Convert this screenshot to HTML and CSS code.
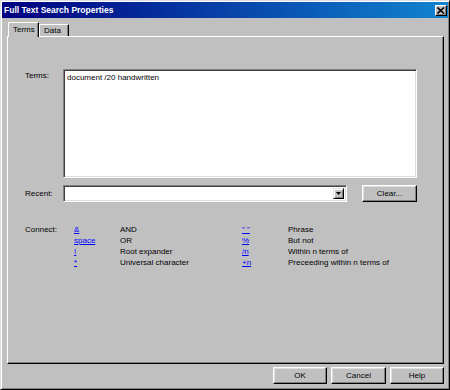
FILE: index.html
```html
<!DOCTYPE html>
<html>
<head>
<meta charset="utf-8">
<link rel="stylesheet" href="styles.css">
</head>
<body>
<div class="window">
  <div class="titlebar">
    <span class="title">Full Text Search Properties</span>
    <span class="close"><svg width="8" height="7" viewBox="0 0 8 7"><path d="M0.5 0.5 L7 6.5 M7 0.5 L0.5 6.5" stroke="#000" stroke-width="1.6"/></svg></span>
  </div>
  <div class="content">
    <div class="tabs">
      <div class="tab active">Terms</div>
      <div class="tab">Data</div>
    </div>
    <div class="panel">
      <div class="form">
        <div class="label label-top">Terms:</div>
        <div class="textarea">document /20 handwritten</div>
        <div class="label">Recent:</div>
        <div class="recent-row">
          <div class="combo">
            <div class="combo-btn"><svg width="5" height="3" viewBox="0 0 5 3"><path d="M0 0 H5 L2.5 3 Z" fill="#000"/></svg></div>
          </div>
          <div class="btn clear">Clear...</div>
        </div>
      </div>
      <div class="connect">
        <div class="label">Connect:</div>
        <a class="op">&amp;</a><span>AND</span>
        <a class="op">" "</a><span>Phrase</span>
        <div></div>
        <a class="op">space</a><span>OR</span>
        <a class="op">%</a><span>But not</span>
        <div></div>
        <a class="op">!</a><span>Root expander</span>
        <a class="op">/n</a><span>Within n terms of</span>
        <div></div>
        <a class="op">*</a><span>Universal character</span>
        <a class="op">+n</a><span>Preceeding within n terms of</span>
      </div>
    </div>
    <div class="buttons">
      <div class="btn ok">OK</div>
      <div class="btn cancel">Cancel</div>
      <div class="btn help">Help</div>
    </div>
  </div>
</div>
</body>
</html>
```

FILE: styles.css
```css
html, body {
  margin: 0;
  padding: 0;
  background: #c0c0c0;
}
.window {
  width: 450px;
  height: 390px;
  box-sizing: border-box;
  background: #c0c0c0;
  border: 1px solid;
  border-color: #dfdfdf #000 #000 #dfdfdf;
  box-shadow: inset 1px 1px #fff, inset -1px -1px #808080;
  padding: 1px;
  display: flex;
  flex-direction: column;
  font-family: "Liberation Sans", Arial, sans-serif;
  font-size: 8px;
  color: #000;
}
.titlebar {
  height: 16px;
  flex: none;
  display: flex;
  align-items: center;
  justify-content: space-between;
  background: linear-gradient(to right, #000080, #1084d0);
  padding: 0 1px 0 2px;
}
.title {
  color: #fff;
  font-weight: bold;
  font-size: 8.5px;
}
.close {
  width: 12px;
  height: 11px;
  box-sizing: border-box;
  background: #c0c0c0;
  border: 1px solid;
  border-color: #fff #000 #000 #fff;
  box-shadow: inset -1px -1px #808080;
  display: flex;
  align-items: center;
  justify-content: center;
}
.content {
  flex: 1;
  display: flex;
  flex-direction: column;
  padding: 4px 4px 4px 5px;
}
.tabs {
  display: flex;
  align-items: flex-end;
  padding-left: 1px;
  height: 14px;
  flex: none;
}
.tab {
  box-sizing: border-box;
  height: 12px;
  padding: 1px 0 0 4px;
  width: 30px;
  border-top: 1px solid #fff;
  border-left: 1px solid #fff;
  border-right: 1px solid #000;
  box-shadow: inset -1px 0 #808080;
  line-height: 10px;
}
.tab.active {
  height: 15px;
  width: 31px;
  margin-bottom: -1px;
  background: #c0c0c0;
  position: relative;
  z-index: 1;
  padding-top: 2px;
}
.panel {
  flex: 1;
  box-sizing: border-box;
  border: 1px solid;
  border-color: #fff #000 #000 #fff;
  box-shadow: inset -1px -1px #808080;
  padding: 32px 0 0 17px;
}
.form {
  display: grid;
  grid-template-columns: 38px 354px;
  row-gap: 7px;
}
.label {
  line-height: 11px;
  align-self: center;
}
.label-top {
  align-self: start;
  padding-top: 1px;
}
.textarea {
  height: 109px;
  box-sizing: border-box;
  background: #fff;
  border: 1px solid;
  border-color: #808080 #fff #fff #808080;
  box-shadow: inset 1px 1px #404040, inset -1px -1px #dfdfdf;
  padding: 2px 3px;
  line-height: 11px;
}
.recent-row {
  display: flex;
  gap: 15px;
}
.combo {
  width: 284px;
  height: 17px;
  box-sizing: border-box;
  background: #fff;
  border: 1px solid;
  border-color: #808080 #fff #fff #808080;
  box-shadow: inset 1px 1px #404040, inset -1px -1px #dfdfdf;
  display: flex;
  justify-content: flex-end;
  padding: 2px 2px 2px 0;
}
.combo-btn {
  width: 11px;
  box-sizing: border-box;
  background: #c0c0c0;
  border: 1px solid;
  border-color: #dfdfdf #000 #000 #dfdfdf;
  box-shadow: inset 1px 1px #fff, inset -1px -1px #808080;
  display: flex;
  align-items: center;
  justify-content: center;
}
.btn {
  box-sizing: border-box;
  height: 17px;
  background: #c0c0c0;
  border: 1px solid;
  border-color: #fff #000 #000 #fff;
  box-shadow: inset -1px -1px #808080, inset 1px 1px #dfdfdf;
  display: flex;
  align-items: center;
  justify-content: center;
}
.clear { width: 55px; }
.connect {
  margin-top: 22px;
  display: grid;
  grid-template-columns: 49px 46px 122px 46px auto;
  line-height: 11px;
}
.op {
  color: #0000ff;
  text-decoration: underline;
}
.buttons {
  display: flex;
  justify-content: flex-end;
  gap: 4px;
  margin-top: 3px;
}
.ok { width: 54px; }
.cancel { width: 55px; }
.help { width: 54px; }
```
